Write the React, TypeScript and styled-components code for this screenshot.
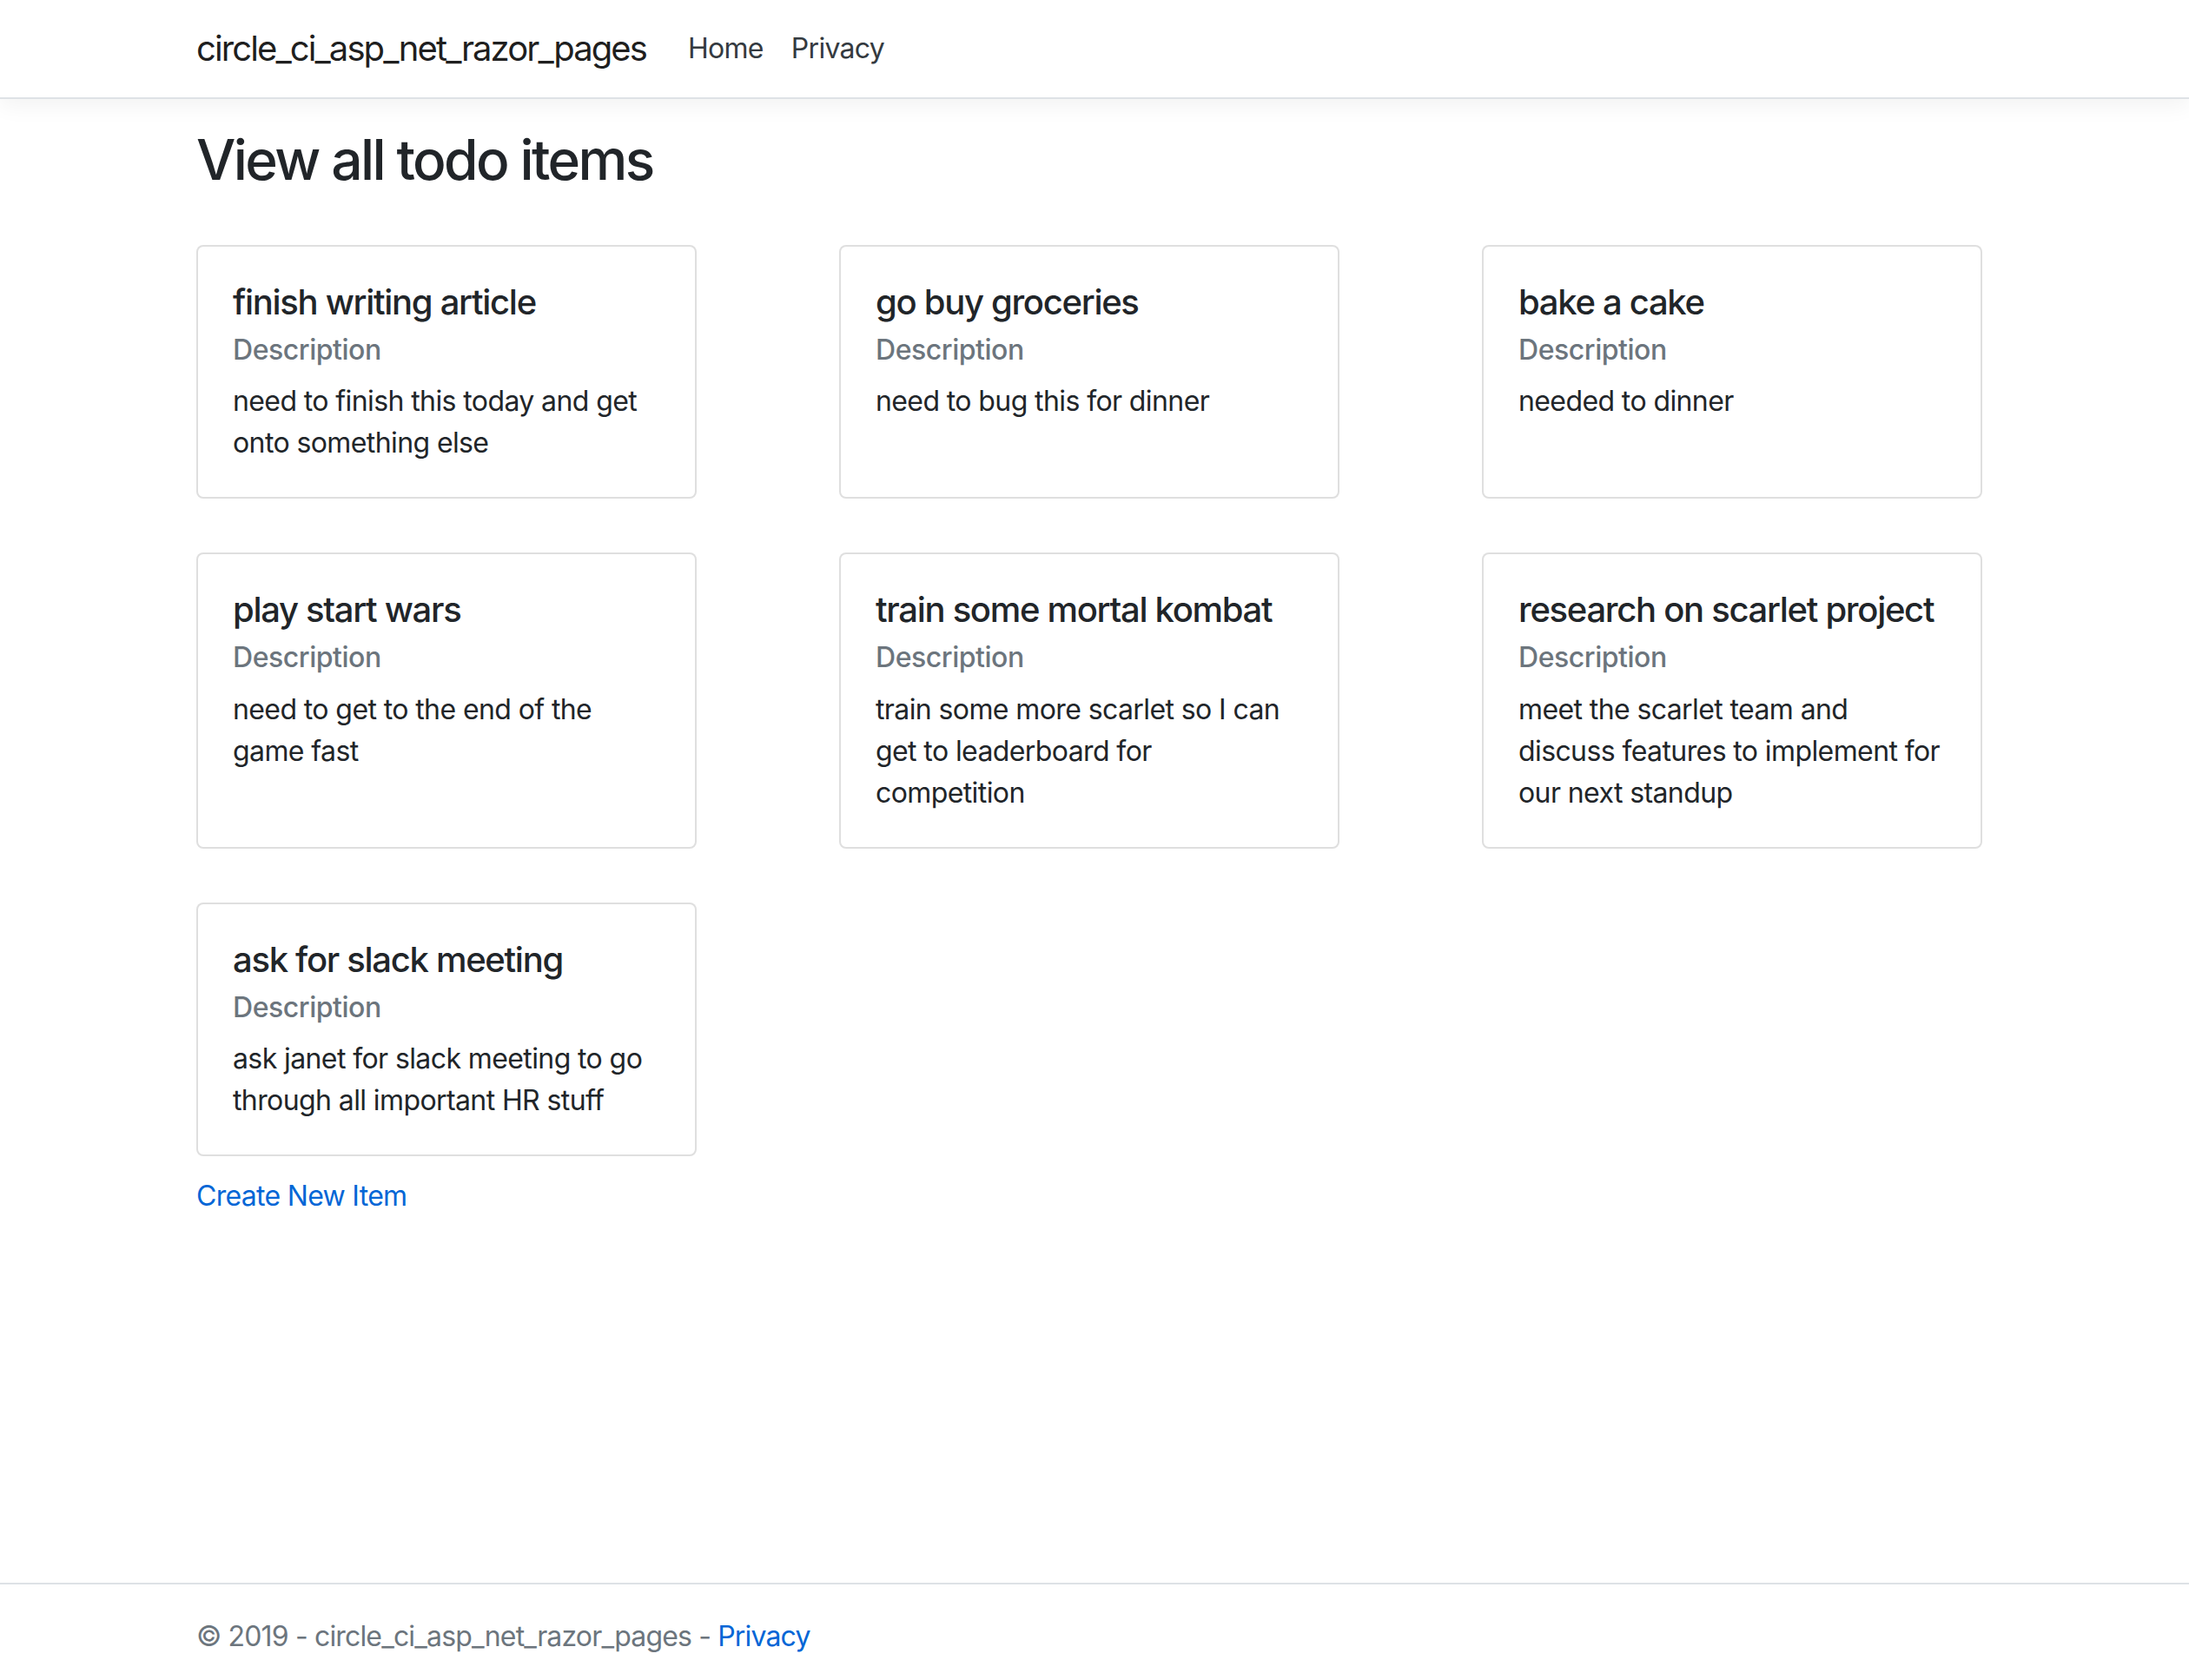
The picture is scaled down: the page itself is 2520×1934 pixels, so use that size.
import React from 'react';
import styled, { createGlobalStyle } from 'styled-components';

const GlobalStyle = createGlobalStyle`
  html, body {
    margin: 0;
    padding: 0;
    overflow: hidden;
    background: #ffffff;
  }
  body {
    font-family: Inter, "Liberation Sans", sans-serif;
    color: #212529;
    font-size: 32px;
    line-height: 1.5;
    letter-spacing: -0.7px;
  }
  * {
    box-sizing: border-box;
  }
`;

const Page = styled.div`
  display: flex;
  flex-direction: column;
  min-height: calc(100vh + 8px);
`;

const Navbar = styled.header`
  display: flex;
  align-items: center;
  height: 114px;
  padding: 16px 0;
  background: #ffffff;
  border-bottom: 2px solid #dee2e6;
  box-shadow: 0 8px 24px rgba(0, 0, 0, 0.05);
`;

const Container = styled.div`
  padding-left: 226px;
  display: flex;
  align-items: center;
`;

const Brand = styled.a`
  font-size: 40px;
  line-height: 60px;
  letter-spacing: -1.9px;
  padding: 10px 0;
  margin-right: 32px;
  color: rgba(0, 0, 0, 0.9);
  text-decoration: none;
  white-space: nowrap;
`;

const NavLink = styled.a`
  font-size: 32px;
  line-height: 48px;
  padding: 16px;
  color: #343a40;
  text-decoration: none;
`;

const Main = styled.main`
  flex: 1;
  padding: 32px 0 0 226px;
`;

const Title = styled.h1`
  margin: 0 0 59px;
  font-size: 64px;
  font-weight: 500;
  line-height: 1.2;
  letter-spacing: -2.6px;
`;

const CardGrid = styled.div`
  display: grid;
  grid-template-columns: repeat(3, 576px);
  column-gap: 164px;
  row-gap: 62px;
  margin-bottom: 22px;
`;

const Card = styled.div`
  border: 2px solid rgba(0, 0, 0, 0.125);
  border-radius: 8px;
  padding: 40px 40px 38px;
  background: #ffffff;
`;

const CardTitle = styled.h5`
  margin: 0 0 24px;
  font-size: 40px;
  font-weight: 500;
  line-height: 1.2;
  letter-spacing: -1.3px;
`;

const CardSubtitle = styled.h6`
  margin: -12px 0 16px;
  font-size: 32px;
  font-weight: 500;
  line-height: 1.2;
  letter-spacing: -0.45px;
  color: #6c757d;
`;

const CardText = styled.p`
  margin: 0;
  font-size: 32px;
  line-height: 48px;
  letter-spacing: -0.6px;
`;

const Link = styled.a`
  color: #0366d6;
  text-decoration: none;
`;

const CreateLine = styled.p`
  margin: 0;
  font-size: 32px;
  line-height: 48px;
`;

const Footer = styled.footer`
  border-top: 2px solid #dee2e6;
  height: 120px;
  line-height: 120px;
  padding-left: 226px;
  font-size: 32px;
  letter-spacing: -0.84px;
  color: #6c757d;
  white-space: nowrap;
`;

const todos = [
  { title: 'finish writing article', text: 'need to finish this today and get onto something else' },
  { title: 'go buy groceries', text: 'need to bug this for dinner' },
  { title: 'bake a cake', text: 'needed to dinner' },
  { title: 'play start wars', text: 'need to get to the end of the game fast' },
  { title: 'train some mortal kombat', text: 'train some more scarlet so I can get to leaderboard for competition' },
  { title: 'research on scarlet project', text: 'meet the scarlet team and discuss features to implement for our next standup' },
  { title: 'ask for slack meeting', text: 'ask janet for slack meeting to go through all important HR stuff' },
];

export default function App() {
  return (
    <Page>
      <GlobalStyle />
      <Navbar>
        <Container>
          <Brand href="#">circle_ci_asp_net_razor_pages</Brand>
          <NavLink href="#">Home</NavLink>
          <NavLink href="#">Privacy</NavLink>
        </Container>
      </Navbar>

      <Main>
        <Title>View all todo items</Title>
        <CardGrid>
          {todos.map((todo) => (
            <Card key={todo.title}>
              <CardTitle>{todo.title}</CardTitle>
              <CardSubtitle>Description</CardSubtitle>
              <CardText>{todo.text}</CardText>
            </Card>
          ))}
        </CardGrid>
        <CreateLine>
          <Link href="#">Create New Item</Link>
        </CreateLine>
      </Main>

      <Footer>
        © 2019 - circle_ci_asp_net_razor_pages - <Link href="#">Privacy</Link>
      </Footer>
    </Page>
  );
}
